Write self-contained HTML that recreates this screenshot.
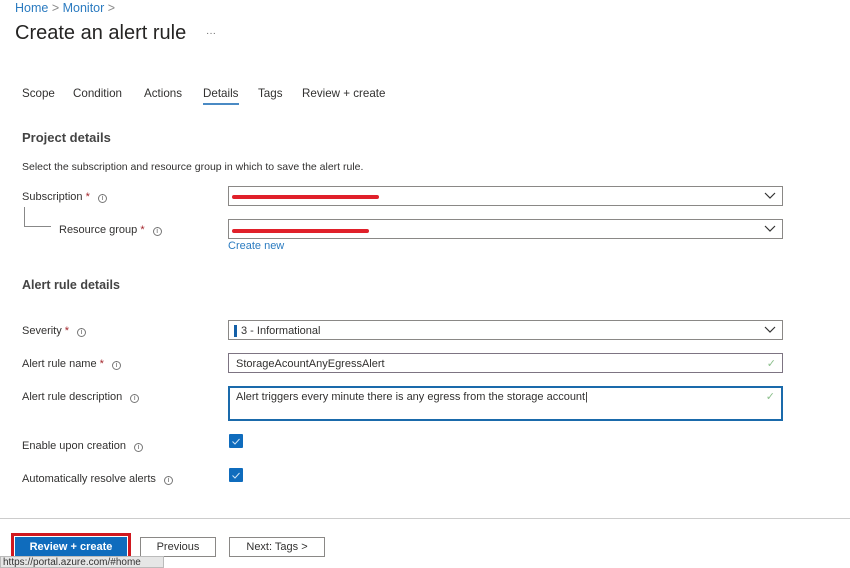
<!DOCTYPE html>
<html><head><style>
*{margin:0;padding:0;box-sizing:border-box}
body{width:850px;height:568px;background:#fff;font-family:"Liberation Sans",sans-serif;color:#323130;position:relative;overflow:hidden;font-size:11px}
.a{position:absolute;white-space:nowrap}
.box{position:absolute;left:228px;width:555px;height:20px;border:1px solid #8a8886;background:#fff}
.chev{position:absolute;right:6px;top:5px}
.info{display:inline-block;width:9px;height:9px;border:1px solid #777;border-radius:50%;font-size:7px;line-height:7px;text-align:center;color:#555;vertical-align:0px;margin-left:8px}
.cb{position:absolute;left:229px;width:14px;height:14px;background:#0f6cbd;border-radius:1px}
.red{position:absolute;height:4px;background:#e0202a;border-radius:2px}
.tick{position:absolute;right:6px;top:3px;color:#8cbf8c;font-size:11px}
.btn{position:absolute;top:537px;height:20px;border:1px solid #8a8886;background:#fff;font-size:11px;text-align:center;line-height:18px}
.t{position:absolute;top:87px;font-size:11.6px;white-space:nowrap}
</style></head><body>
<div class="a" style="left:15px;top:1px;font-size:12.5px;color:#2b7bc0">Home <span style="color:#888">&gt;</span> Monitor <span style="color:#888">&gt;</span></div>
<div class="a" style="left:15px;top:22px;font-size:20px;color:#252423">Create an alert rule</div>
<div class="a" style="left:206px;top:28px;font-size:10px;color:#666">···</div>

<div class="t" style="left:22px">Scope</div>
<div class="t" style="left:73px">Condition</div>
<div class="t" style="left:144px">Actions</div>
<div class="t" style="left:203px">Details</div>
<div class="a" style="left:203px;top:103px;width:36px;height:2px;background:#4a8ac4"></div>
<div class="t" style="left:258px">Tags</div>
<div class="t" style="left:302px">Review + create</div>

<div class="a" style="left:22px;top:130px;font-size:13px;font-weight:bold;color:#444">Project details</div>
<div class="a" style="left:22px;top:161px;font-size:10.5px">Select the subscription and resource group in which to save the alert rule.</div>

<div class="a" style="left:22px;top:191px">Subscription <span style="color:#a4262c">*</span><span class="info">i</span></div>
<div class="a" style="left:24px;top:207px;width:1px;height:19px;background:#888"></div>
<div class="a" style="left:24px;top:226px;width:27px;height:1px;background:#888"></div>
<div class="a" style="left:59px;top:224px">Resource group <span style="color:#a4262c">*</span><span class="info">i</span></div>
<div class="box" style="top:186px"><div class="red" style="left:3px;top:8px;width:147px"></div><svg class="chev" width="12" height="8"><path d="M1 1l5 5 5-5" stroke="#333" fill="none" stroke-width="1.2"/></svg></div>
<div class="box" style="top:219px"><div class="red" style="left:3px;top:9px;width:137px"></div><svg class="chev" width="12" height="8"><path d="M1 1l5 5 5-5" stroke="#333" fill="none" stroke-width="1.2"/></svg></div>
<div class="a" style="left:228px;top:240px;color:#2b7bc0">Create new</div>

<div class="a" style="left:22px;top:278px;font-size:12.5px;font-weight:bold;color:#444">Alert rule details</div>

<div class="a" style="left:22px;top:325px">Severity <span style="color:#a4262c">*</span><span class="info">i</span></div>
<div class="box" style="top:320px"><div class="a" style="left:5px;top:4px;width:3px;height:12px;background:#1460a8"></div><div class="a" style="left:12px;top:4px">3 - Informational</div><svg class="chev" width="12" height="8"><path d="M1 1l5 5 5-5" stroke="#333" fill="none" stroke-width="1.2"/></svg></div>

<div class="a" style="left:22px;top:358px">Alert rule name <span style="color:#a4262c">*</span><span class="info">i</span></div>
<div class="box" style="top:353px;border-color:#7d7482"><div class="a" style="left:7px;top:4px">StorageAcountAnyEgressAlert</div><span class="tick">✓</span></div>

<div class="a" style="left:22px;top:391px">Alert rule description<span class="info">i</span></div>
<div class="box" style="top:386px;height:35px;border:2px solid #1a6aab"><div class="a" style="left:6px;top:3px">Alert triggers every minute there is any egress from the storage account|</div><span class="tick" style="top:2px">✓</span></div>

<div class="a" style="left:22px;top:440px">Enable upon creation<span class="info">i</span></div>
<div class="cb" style="top:434px"><svg width="14" height="14"><path d="M3.5 7.5l2.5 2.5 4.5-5" stroke="#cfe4f7" fill="none" stroke-width="1"/></svg></div>
<div class="a" style="left:22px;top:473px">Automatically resolve alerts<span class="info">i</span></div>
<div class="cb" style="top:468px"><svg width="14" height="14"><path d="M3.5 7.5l2.5 2.5 4.5-5" stroke="#cfe4f7" fill="none" stroke-width="1"/></svg></div>

<div class="a" style="left:0;top:518px;width:850px;height:1px;background:#ccc"></div>
<div class="a" style="left:11px;top:533px;width:120px;height:28px;border:3px solid #d0181f"></div>
<div class="btn" style="left:15px;width:112px;background:#0f6cbd;border-color:#0f6cbd;color:#fff;font-weight:bold">Review + create</div>
<div class="btn" style="left:140px;width:76px">Previous</div>
<div class="btn" style="left:229px;width:96px">Next: Tags &gt;</div>
<div class="a" style="left:0;top:556px;width:164px;height:12px;background:#e6e6e6;border:1px solid #bbb;font-size:10px;line-height:11px;padding-left:2px;color:#333">https://portal.azure.com/#home</div>
</body></html>
